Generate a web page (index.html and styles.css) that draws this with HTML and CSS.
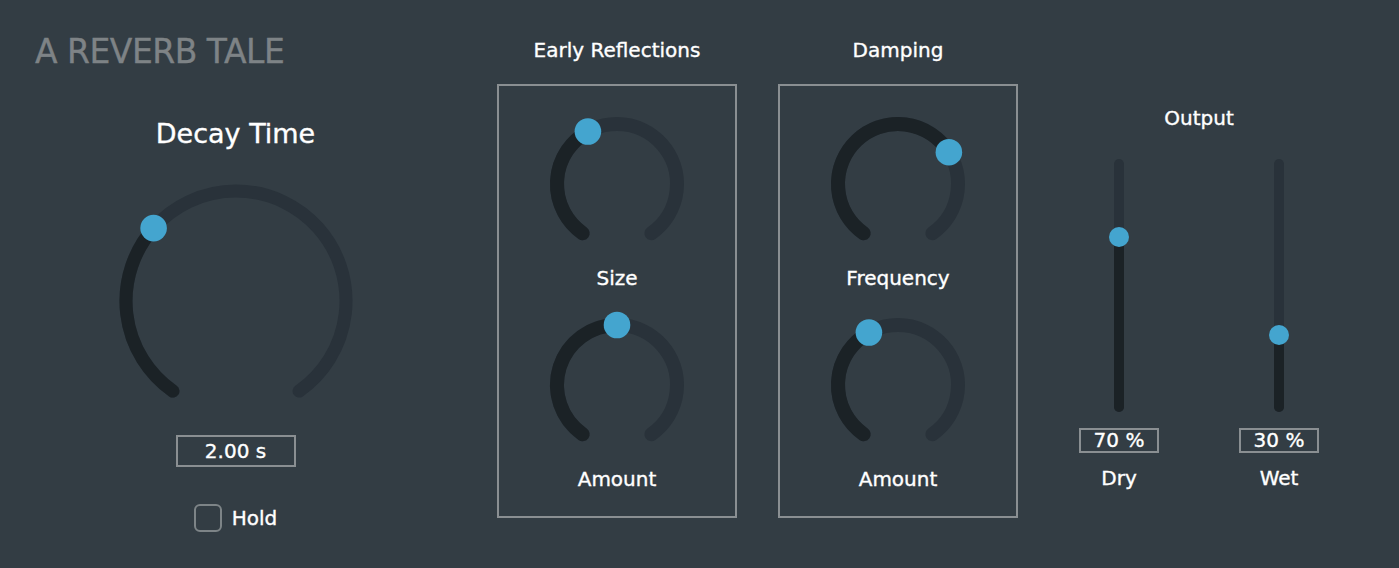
FILE: index.html
```html
<!DOCTYPE html>
<html lang="en">
<head>
<meta charset="utf-8">
<title>A Reverb Tale</title>
<link rel="stylesheet" href="styles.css">
</head>
<body>
<main class="plugin">
  <section class="col col-decay">
    <h1 class="brand">A REVERB TALE</h1>
    <h2 class="decay-title">Decay Time</h2>
    <svg class="knob-big" width="240" height="216" viewBox="0 0 240 216">
      <path class="track" d="M56.91 208.11 A110 110 0 1 1 183.09 208.11" stroke-width="13"/>
      <path class="fill" d="M56.91 208.11 A110 110 0 0 1 37.61 45.12" stroke-width="13"/>
      <circle class="handle" cx="37.61" cy="45.12" r="13.3"/>
    </svg>
    <div class="value value-decay">2.00 s</div>
    <label class="hold">
      <span class="checkbox"></span>
      <span class="hold-text">Hold</span>
    </label>
  </section>

  <section class="col col-group col-early">
    <h3 class="group-title">Early Reflections</h3>
    <div class="group-box">
      <svg class="knob" width="160" height="135" viewBox="0 0 160 135">
        <path class="track" d="M45.58 124.15 A60 60 0 1 1 114.42 124.15" stroke-width="14"/>
        <path class="fill" d="M45.58 124.15 A60 60 0 0 1 50.91 22.52" stroke-width="14"/>
        <circle class="handle" cx="50.91" cy="22.52" r="13.3"/>
      </svg>
      <div class="knob-label">Size</div>
      <svg class="knob knob-second" width="160" height="135" viewBox="0 0 160 135">
        <path class="track" d="M45.58 124.15 A60 60 0 1 1 114.42 124.15" stroke-width="14"/>
        <path class="fill" d="M45.58 124.15 A60 60 0 0 1 80 15" stroke-width="14"/>
        <circle class="handle" cx="80" cy="15" r="13.3"/>
      </svg>
      <div class="knob-label">Amount</div>
    </div>
  </section>

  <section class="col col-group col-damping">
    <h3 class="group-title">Damping</h3>
    <div class="group-box">
      <svg class="knob" width="160" height="135" viewBox="0 0 160 135">
        <path class="track" d="M45.58 124.15 A60 60 0 1 1 114.42 124.15" stroke-width="14"/>
        <path class="fill" d="M45.58 124.15 A60 60 0 1 1 130.88 43.21" stroke-width="14"/>
        <circle class="handle" cx="130.88" cy="43.21" r="13.3"/>
      </svg>
      <div class="knob-label">Frequency</div>
      <svg class="knob knob-second" width="160" height="135" viewBox="0 0 160 135">
        <path class="track" d="M45.58 124.15 A60 60 0 1 1 114.42 124.15" stroke-width="14"/>
        <path class="fill" d="M45.58 124.15 A60 60 0 0 1 50.91 22.52" stroke-width="14"/>
        <circle class="handle" cx="50.91" cy="22.52" r="13.3"/>
      </svg>
      <div class="knob-label">Amount</div>
    </div>
  </section>

  <section class="col col-output">
    <h3 class="output-title">Output</h3>
    <div class="faders">
      <div class="fader-col">
        <div class="fader" style="--v: 69%">
          <div class="fader-fill"></div>
          <div class="fader-handle"></div>
        </div>
        <div class="value value-small">70 %</div>
        <div class="fader-label">Dry</div>
      </div>
      <div class="fader-col">
        <div class="fader" style="--v: 30.5%">
          <div class="fader-fill"></div>
          <div class="fader-handle"></div>
        </div>
        <div class="value value-small">30 %</div>
        <div class="fader-label">Wet</div>
      </div>
    </div>
  </section>
</main>
</body>
</html>
```

FILE: styles.css
```css
html, body {
  margin: 0;
  padding: 0;
}

body {
  width: 1399px;
  height: 568px;
  background: #333d44;
  color: #ffffff;
  font-family: "DejaVu Sans", "Verdana", sans-serif;
  -webkit-text-stroke: 0.35px currentColor;
  overflow: hidden;
}

.plugin {
  display: flex;
  align-items: flex-start;
  height: 568px;
}

.col {
  display: flex;
  flex-direction: column;
  align-items: center;
}

h1, h2, h3 {
  margin: 0;
  font-weight: normal;
}

/* Decay column */
.col-decay {
  width: 471px;
}

.brand {
  align-self: stretch;
  margin-top: 32px;
  padding-left: 35px;
  font-size: 33px;
  line-height: 40px;
  color: #7e8386;
  letter-spacing: -0.5px;
}

.decay-title {
  margin-top: 46px;
  font-size: 27px;
  line-height: 32px;
}

.knob-big {
  display: block;
  margin-top: 33px;
}

.track {
  fill: none;
  stroke: #29323a;
  stroke-linecap: round;
}

.fill {
  fill: none;
  stroke: #1b2226;
  stroke-linecap: round;
}

.handle {
  fill: #44a5cf;
}

.value {
  box-sizing: border-box;
  border: 2px solid #8a8f92;
  text-align: center;
  font-size: 20px;
  color: #ffffff;
}

.value-decay {
  margin-top: 36px;
  width: 120px;
  height: 32px;
  line-height: 28px;
}

.hold {
  display: flex;
  align-items: center;
  gap: 10px;
  margin-top: 37px;
  font-size: 20px;
}

.checkbox {
  box-sizing: border-box;
  width: 28px;
  height: 28px;
  border: 2px solid #7d8487;
  border-radius: 6px;
}

.hold-text {
  line-height: 28px;
}

/* Groups */
.col-group {
  width: 240px;
}

.col-early {
  margin-left: 26px;
}

.col-damping {
  margin-left: 41px;
}

.group-title {
  margin-top: 38px;
  font-size: 20px;
  line-height: 24px;
}

.group-box {
  box-sizing: border-box;
  width: 240px;
  height: 434px;
  margin-top: 22px;
  border: 2px solid #8a8f92;
  padding-top: 23px;
  display: flex;
  flex-direction: column;
  align-items: center;
}

.knob {
  display: block;
}

.knob-second {
  margin-top: 20px;
}

.knob-label {
  margin-top: 22px;
  font-size: 20px;
  line-height: 24px;
}

/* Output */
.col-output {
  width: 320px;
  margin-left: 21px;
}

.output-title {
  margin-top: 106px;
  font-size: 20px;
  line-height: 24px;
}

.faders {
  display: flex;
  margin-top: 29px;
}

.fader-col {
  width: 160px;
  display: flex;
  flex-direction: column;
  align-items: center;
}

.fader {
  position: relative;
  width: 10px;
  height: 253px;
  border-radius: 5px;
  background: #29323a;
}

.fader-fill {
  position: absolute;
  left: 0;
  right: 0;
  bottom: 0;
  height: var(--v);
  border-radius: 5px;
  background: #1b2226;
}

.fader-handle {
  position: absolute;
  left: 50%;
  bottom: var(--v);
  width: 20px;
  height: 20px;
  margin-left: -10px;
  margin-bottom: -10px;
  border-radius: 50%;
  background: #44a5cf;
}

.value-small {
  margin-top: 16px;
  width: 80px;
  height: 25px;
  line-height: 21px;
}

.fader-label {
  margin-top: 13px;
  font-size: 20px;
  line-height: 24px;
}
```
